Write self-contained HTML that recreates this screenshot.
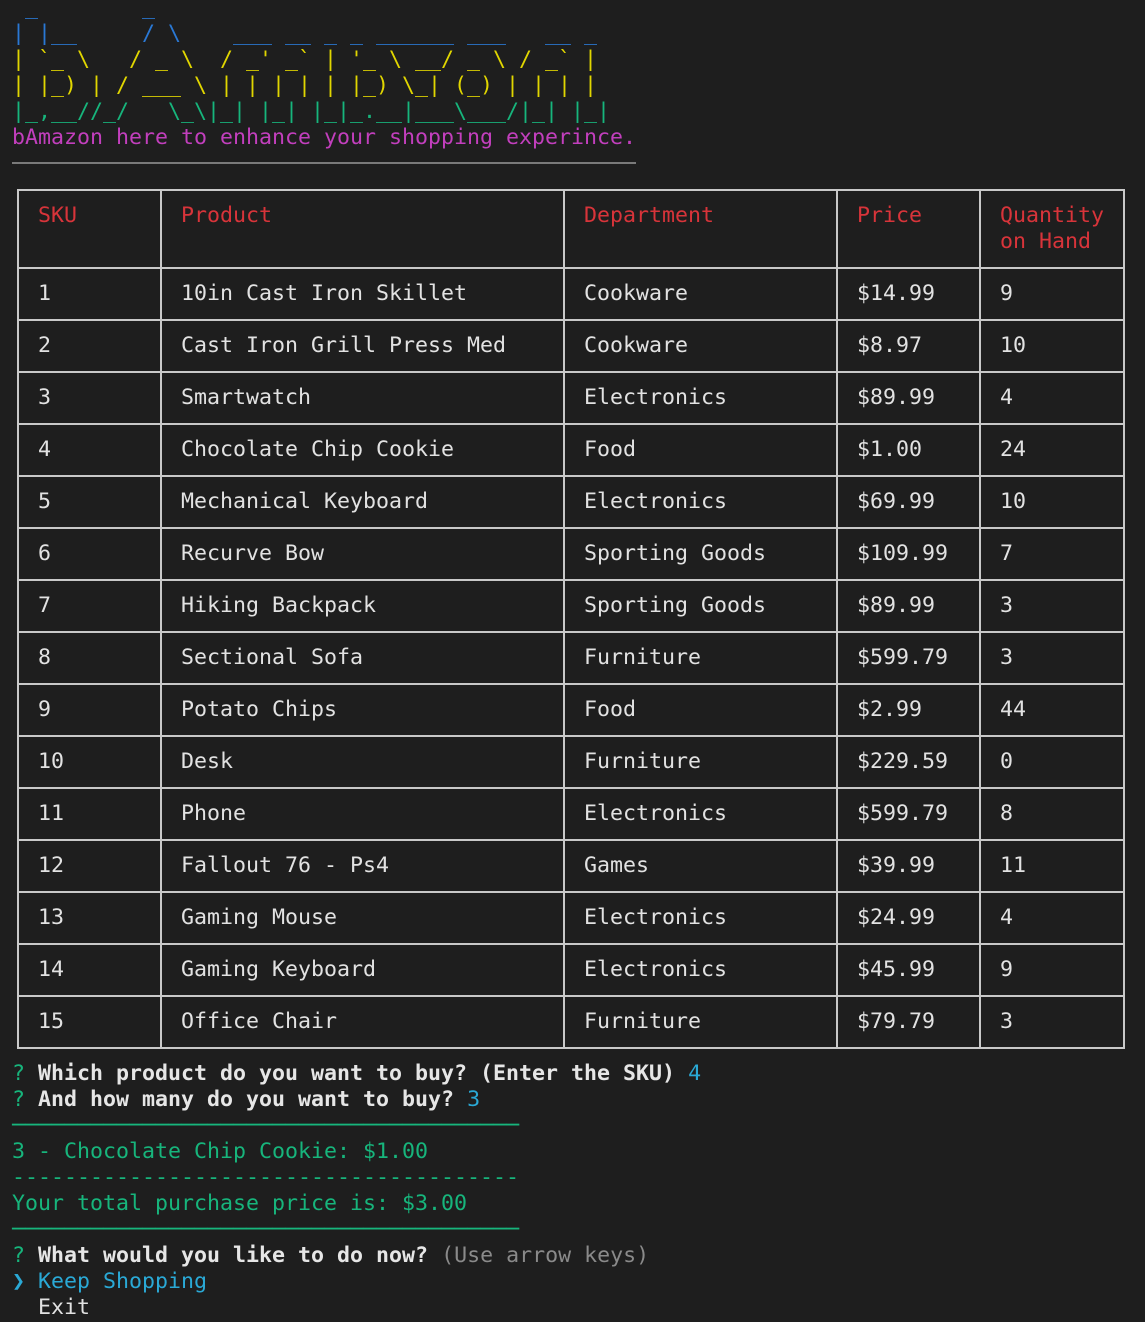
<!DOCTYPE html>
<html><head><meta charset="utf-8"><style>
html,body{margin:0;padding:0;background:#1e1e1e;width:1145px;height:1322px;overflow:hidden}
body{font-family:"DejaVu Sans Mono","Liberation Mono",monospace;font-size:21.6px;line-height:26px;color:#e2e2e2;position:relative}
pre{margin:0;font:inherit;white-space:pre}
.art{position:absolute;left:12px;top:-5px}
.b{color:#2a78d4}.y{color:#e1d600}.g{color:#17b57c}.m{color:#c23fbd}.c{color:#2aa9d6}.r{color:#d8343a}.gr{color:#8a8a8a}
.sep{position:absolute;left:12px;top:162px;width:624px;height:2px;background:#7a7a7a}
table{position:absolute;left:17px;top:189px;border-collapse:collapse;table-layout:fixed}
td{border:2px solid #c9c9c9;vertical-align:top;padding:12px 0 0 19px;height:38px;box-sizing:content-box;white-space:pre}
tr.h td{height:64px;color:#d8343a}
.bot{position:absolute;left:12px;top:1061px}
.bold{font-weight:bold;color:#e6e6e6}
</style></head><body>
<pre class="art"><span class="b"> _        _
| |__     / \    ___ __ _ _ ______ ___   __ _</span>
<span class="y">| `_ \   / _ \  / _' _` | '_ \ __/ _ \ / _` |
| |_) | / ___ \ | | | | | |_) \_| (_) | | | |</span>
<span class="g">|_,__//_/   \_\|_| |_| |_|_.__|___\___/|_| |_|</span>
<span class="m">bAmazon here to enhance your shopping experince.</span></pre>
<div class="sep"></div>
<table>
<colgroup><col style="width:143px"><col style="width:403px"><col style="width:273px"><col style="width:143px"><col style="width:144px"></colgroup>
<tr class="h"><td>SKU</td><td>Product</td><td>Department</td><td>Price</td><td>Quantity
on Hand</td></tr>
<tr><td>1</td><td>10in Cast Iron Skillet</td><td>Cookware</td><td>$14.99</td><td>9</td></tr>
<tr><td>2</td><td>Cast Iron Grill Press Med</td><td>Cookware</td><td>$8.97</td><td>10</td></tr>
<tr><td>3</td><td>Smartwatch</td><td>Electronics</td><td>$89.99</td><td>4</td></tr>
<tr><td>4</td><td>Chocolate Chip Cookie</td><td>Food</td><td>$1.00</td><td>24</td></tr>
<tr><td>5</td><td>Mechanical Keyboard</td><td>Electronics</td><td>$69.99</td><td>10</td></tr>
<tr><td>6</td><td>Recurve Bow</td><td>Sporting Goods</td><td>$109.99</td><td>7</td></tr>
<tr><td>7</td><td>Hiking Backpack</td><td>Sporting Goods</td><td>$89.99</td><td>3</td></tr>
<tr><td>8</td><td>Sectional Sofa</td><td>Furniture</td><td>$599.79</td><td>3</td></tr>
<tr><td>9</td><td>Potato Chips</td><td>Food</td><td>$2.99</td><td>44</td></tr>
<tr><td>10</td><td>Desk</td><td>Furniture</td><td>$229.59</td><td>0</td></tr>
<tr><td>11</td><td>Phone</td><td>Electronics</td><td>$599.79</td><td>8</td></tr>
<tr><td>12</td><td>Fallout 76 - Ps4</td><td>Games</td><td>$39.99</td><td>11</td></tr>
<tr><td>13</td><td>Gaming Mouse</td><td>Electronics</td><td>$24.99</td><td>4</td></tr>
<tr><td>14</td><td>Gaming Keyboard</td><td>Electronics</td><td>$45.99</td><td>9</td></tr>
<tr><td>15</td><td>Office Chair</td><td>Furniture</td><td>$79.79</td><td>3</td></tr>
</table>
<pre class="bot"><span class="g">?</span> <span class="bold">Which product do you want to buy? (Enter the SKU)</span> <span class="c">4</span>
<span class="g">?</span> <span class="bold">And how many do you want to buy?</span> <span class="c">3</span>
<span class="g">───────────────────────────────────────</span>
<span class="g">3 - Chocolate Chip Cookie: $1.00</span>
<span class="g">---------------------------------------</span>
<span class="g">Your total purchase price is: $3.00</span>
<span class="g">───────────────────────────────────────</span>
<span class="g">?</span> <span class="bold">What would you like to do now?</span> <span class="gr">(Use arrow keys)</span>
<span class="c">❯ Keep Shopping</span>
  Exit</pre>
</body></html>
